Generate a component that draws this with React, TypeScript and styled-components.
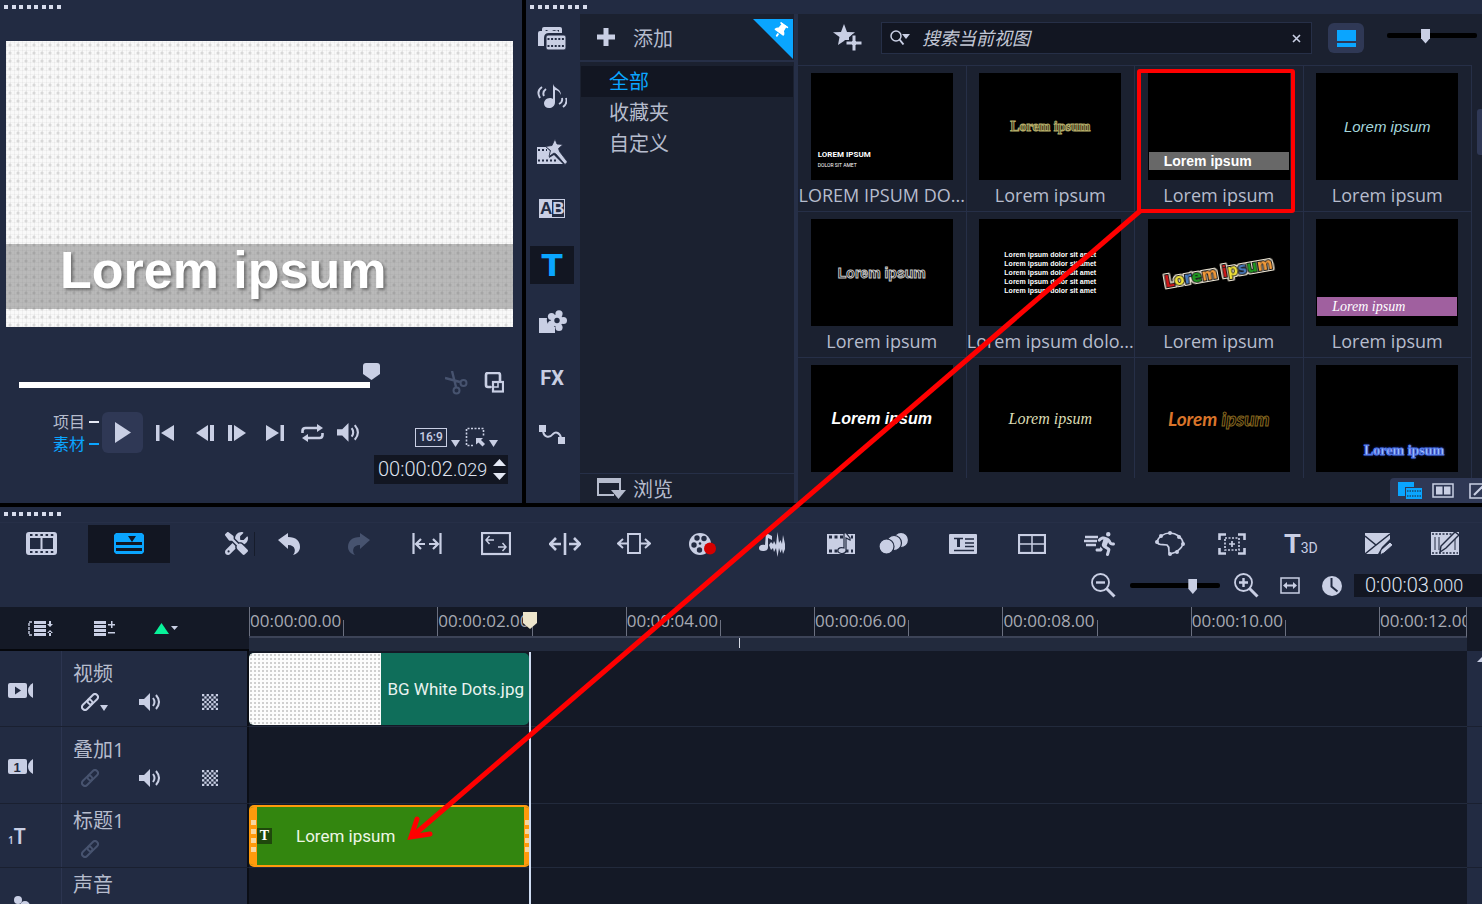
import React from "react";
import styled, { createGlobalStyle, css } from "styled-components";
import { FaPersonRunning, FaScrewdriverWrench, FaThumbtack } from "react-icons/fa6";

const c = {
  panel: "#222b42",
  shell: "#1b2130",
  deep: "#121622",
  lane: "#141926",
  line: "#262f47",
  raised: "#2f3855",
  ink: "#c9cfe4",
  text: "#b6bccd",
  dim: "#47536f",
  blue: "#0aa5ff",
  red: "#ff0000",
};

const ui = `"Open Sans", "Noto Sans CJK SC", sans-serif`;

const Global = createGlobalStyle`
  * { box-sizing: border-box; }
  body { margin: 0; background: #000; color: ${c.text}; font-family: ${ui}; overflow: hidden; }
  button { background: none; border: 0; padding: 0; margin: 0; color: inherit; font: inherit; cursor: pointer; }
  svg { display: block; flex: none; }
`;

/* ---------- shared parts ---------- */

const Workspace = styled.div`
  position: relative;
  display: flex;
  flex-direction: column;
  gap: 4px;
  height: 100vh;
  overflow: hidden;
`;

const Upper = styled.div`
  display: grid;
  grid-template-columns: 522px minmax(0, 1fr);
  grid-template-rows: minmax(0, 1fr);
  gap: 4px;
  flex: none;
  height: 503px;
`;

const GripRow = styled.div`
  display: flex;
  justify-content: space-between;
  width: 57px;
  height: 14px;
  padding-top: 5px;
  margin-left: 4px;
  flex: none;
`;

const GripDot = styled.span`
  width: 4px;
  height: 4px;
  background: #d7dcec;
`;

const Grip = () => (
  <GripRow>
    {Array.from({ length: 8 }, (_, i) => (
      <GripDot key={i} />
    ))}
  </GripRow>
);

const IconButton = styled.button<{ $w?: number; $dim?: boolean }>`
  display: flex;
  align-items: center;
  justify-content: center;
  width: ${(p) => (p.$w ? `${p.$w}px` : "auto")};
  color: ${(p) => (p.$dim ? c.dim : c.ink)};
  flex: none;
`;

const shield = "polygon(0 0, 100% 0, 100% 65%, 50% 100%, 0 65%)";

const ZoomRange = styled.input.attrs({ type: "range" })`
  appearance: none;
  width: 90px;
  height: 16px;
  margin: 0;
  background: transparent;
  flex: none;
  &::-webkit-slider-runnable-track {
    height: 5px;
    border-radius: 2px;
    background: #000;
  }
  &::-webkit-slider-thumb {
    appearance: none;
    width: 9px;
    height: 15px;
    margin-top: -4px;
    background: ${c.ink};
    clip-path: ${shield};
  }
`;

const Lcd = styled.div`
  display: flex;
  align-items: baseline;
  font: 300 20px/23px Roboto, sans-serif;
  color: #dfe3f0;
`;

const LcdSmall = styled.span`
  font-size: 18px;
`;

/* ---------- icons ---------- */

type SvgProps = { w: number; h: number; children: React.ReactNode };
const Svg = ({ w, h, children }: SvgProps) => (
  <svg width={w} height={h} viewBox={`0 0 ${w} ${h}`} fill="currentColor" aria-hidden="true">
    {children}
  </svg>
);

const stroke = { fill: "none", stroke: "currentColor", strokeWidth: 2.2 };

const Caret = ({ w = 9, h = 7 }: { w?: number; h?: number }) => (
  <Svg w={w} h={h}>
    <path d={`M0 0H${w}L${w / 2} ${h}Z`} />
  </Svg>
);

const MediaIcon = () => (
  <Svg w={28} h={26}>
    <path d="M6 1h16q2 0 2 2v4H11q-5 0-5 5v8H0q0 0 0-2V7q0-2 2-2h2V3q0-2 2-2z" />
    <path d="M7 4h14v3H11z" fill={c.panel} />
    <path d="M7 6l5-3 4 2 3-1 3 3H7z" />
    <path d="M10 9h16q2 0 2 2v11q0 2-2 2H10q-2 0-2-2V11q0-2 2-2z" stroke={c.panel} />
    <path d="M9.500 13h17M9.500 20h17" stroke={c.panel} strokeWidth="2" strokeDasharray="2 1.6" />
  </Svg>
);

const MusicIcon = () => (
  <Svg w={30} h={26}>
    <path d="M16 1c1 5 8 4 8 11-2-4-4-5-6-5v12c0 4-3 6-6 6s-5-2-5-4.500S9 15 13 15c1 0 2 0 3 1z" />
    <g fill="none" stroke="currentColor" strokeWidth="1.900">
      <path d="M5 4Q-1 8 3 15M9 6Q5 9 7 13" />
      <path d="M26 24q5-4 3-9M22 21q4-2 3-6" />
    </g>
  </Svg>
);

const InstantIcon = () => (
  <Svg w={30} h={26}>
    <path d="M0 8h9l4 4-1 7 5-3 9 9H0z" />
    <path d="M1 11h9M1 21.500h20" stroke={c.panel} strokeWidth="2" strokeDasharray="2 2" />
    <path
      d="M18 0l2 5 6 .5-4.500 4 1 3 8 10.500-2.500 2.500L19 15l-2-1-5 3.500 1.500-6-5-4 6.500-1z"
      stroke={c.panel}
      strokeWidth=".8"
    />
  </Svg>
);

const FlowerIcon = () => (
  <Svg w={29} h={24}>
    <path d="M1 8h8c-1 5 2 9 8 9v6H1z" />
    <g>
      <circle cx="21" cy="3.800" r="3.600" />
      <circle cx="13.500" cy="6.500" r="3.600" />
      <circle cx="13.500" cy="14" r="3.600" />
      <circle cx="21" cy="17.500" r="3.600" />
      <circle cx="25.400" cy="10.500" r="3.600" />
      <circle cx="19" cy="10.500" r="6" />
    </g>
    <circle cx="19" cy="10.500" r="2.700" fill={c.panel} />
  </Svg>
);

const PathIcon = () => (
  <Svg w={26} h={20}>
    <rect width="7" height="7" />
    <rect x="19" y="12" width="7" height="7" />
    <path d="M4 6c1 6 6 8 10 3 3-3 7-1 8 4" fill="none" stroke="currentColor" strokeWidth="2" />
  </Svg>
);

const StarPlusIcon = () => (
  <Svg w={30} h={28}>
    <path d="M11 0l3 8 8 .3-6 5V16l-4 0-1 1-6 4 1.500-8L0 8.300 8 8z" />
    <path d="M19 11h4v6h6v4h-6v6h-4v-6h-6v-4h6z" stroke={c.shell} strokeWidth="1" />
  </Svg>
);

const BrowseIcon = () => (
  <Svg w={30} h={22}>
    <path d="M1 1h22v11M1 1v16h16" fill="none" stroke="currentColor" strokeWidth="2" />
    <rect width="24" height="5" />
    <path d="M14 12h15l-7.500 9z" />
  </Svg>
);

const ScissorsIcon = () => (
  <Svg w={23} h={24}>
    <path d="M0 7l15 4M7 0l4 16" fill="none" stroke="currentColor" strokeWidth="2.400" />
    <circle cx="18.500" cy="12" r="3" fill="none" stroke="currentColor" strokeWidth="2" />
    <circle cx="11.500" cy="19.500" r="3" fill="none" stroke="currentColor" strokeWidth="2" />
  </Svg>
);

const ChainIcon = () => (
  <Svg w={18} h={18}>
    <g transform="rotate(-45 9 9)" fill="none" stroke="currentColor" strokeWidth="2">
      <rect x="-1" y="6" width="12" height="6" rx="3" />
      <rect x="7" y="6" width="12" height="6" rx="3" />
    </g>
  </Svg>
);

const SpeakerIcon = ({ w = 22 }: { w?: number }) => (
  <svg width={w} height={(w * 18) / 22} viewBox="0 0 22 18" fill="currentColor" aria-hidden="true">
    <path d="M0 6h5l6-6v18l-6-6H0z" />
    <path d="M14 5q3 4 0 8M17 2q6 7 0 14" fill="none" stroke="currentColor" strokeWidth="2" />
  </svg>
);

const CheckerIcon = () => (
  <Svg w={16} h={16}>
    {Array.from({ length: 49 }, (_, i) => i)
      .filter((i) => i % 2 === 0)
      .map((i) => (
        <rect key={i} x={(i % 7) * 2.3} y={Math.floor(i / 7) * 2.3} width="2.300" height="2.300" />
      ))}
  </Svg>
);

const FilmIcon = () => (
  <Svg w={31} h={23}>
    <rect x="1" y="1" width="29" height="21" rx="2" fill="none" stroke="currentColor" strokeWidth="2" />
    <path d="M1 3.500h29M1 19.500h29" stroke="currentColor" strokeWidth="5" />
    <path d="M4 3h24M4 20h24" stroke={c.panel} strokeWidth="2" strokeDasharray="2.500 2.700" />
    <path d="M3 6v11M28 6v11M15.500 6v11" stroke="currentColor" strokeWidth="2" />
  </Svg>
);

const TimelineIcon = () => (
  <Svg w={30} h={21}>
    <path d="M2 0h26l2 2v17l-2 2H2l-2-2V2z" />
    <path d="M2 9h26v3H2zM2 15h26v3H2zM14 3h8l-4 6z" fill={c.deep} />
  </Svg>
);

const UndoIcon = ({ flip }: { flip?: boolean }) => (
  <Svg w={23} h={22}>
    <path
      transform={flip ? "matrix(-1 0 0 1 23 0)" : undefined}
      d="M0 7L10 0v4c8 0 12 4 12 10 0 4-3 7-7 8 3-3 3-10-5-10v4z"
    />
  </Svg>
);

const FitWidthIcon = () => (
  <Svg w={30} h={22}>
    <path {...stroke} d="M1.500 0v21M28.500 0v21M4 11h9M17 11h9M9 6l-5 5 5 5M21 6l5 5-5 5" />
  </Svg>
);

const PanZoomIcon = () => (
  <Svg w={30} h={24}>
    <rect {...stroke} x="1" y="1" width="28" height="21" />
    <path {...stroke} strokeWidth="1.500" d="M5 8h8M8.500 4L5 8l3.500 4M17 15h8M21.500 11l3.500 4-3.500 4" />
  </Svg>
);

const SplitIcon = () => (
  <Svg w={32} h={24}>
    <path {...stroke} strokeWidth="2.600" d="M16 1v22M2 12h10M20 12h10M7 6l-6 6 6 6M25 6l6 6-6 6" />
  </Svg>
);

const StretchIcon = () => (
  <Svg w={34} h={23}>
    <path {...stroke} strokeWidth="1.900" d="M11 2h12v19H11zM1 11.500h10M23 11.500h10M6 7l-5 4.500L6 16M28 7l5 4.500-5 4.500" />
  </Svg>
);

const RecordIcon = () => (
  <Svg w={28} h={22}>
    <circle cx="11" cy="11" r="11" />
    <g fill={c.panel}>
      <circle cx="8" cy="5" r="2.700" />
      <circle cx="15" cy="5.500" r="2.700" />
      <circle cx="5" cy="12" r="2.700" />
      <circle cx="10.500" cy="17" r="2.700" />
      <circle cx="11" cy="10.500" r="1.300" />
    </g>
    <circle cx="21" cy="15.500" r="6" fill="#d40000" />
  </Svg>
);

const MixerIcon = () => (
  <Svg w={28} h={26}>
    <path d="M8 2l6 3v4l-4-2v9c0 3-2 4-5 4s-4-1-4-3 2-4 6-3z" />
    <path d="M11 14l2-3 2 2 1-3 2 4 1.500-13L21 12l1.500-3L24 13l1-9 2 9v5l-2 5-1-5-1.500 4L21 17l-1.500 9L18 17l-2 4-1-4-2 2z" />
  </Svg>
);

const AutoMusicIcon = () => (
  <Svg w={28} h={22}>
    <path d="M0 1h28v20H0z" />
    <path d="M2 4h24M2 18h24" stroke={c.panel} strokeWidth="3" strokeDasharray="3 2.500" />
    <path d="M7 7h14v8H7z" />
    <path d="M17 0h2l4 5v2l-4-2v13c-1 4-9 3-8-1 0-2 3-3 6-2z" stroke={c.panel} strokeWidth="1.200" />
  </Svg>
);

const MotionIcon = () => (
  <Svg w={30} h={22}>
    <g stroke={c.panel} strokeWidth="1.200">
      <circle cx="22" cy="7" r="7.500" />
      <circle cx="15" cy="10" r="7.500" />
      <circle cx="7.500" cy="13.500" r="7.500" />
    </g>
  </Svg>
);

const SubtitleIcon = () => (
  <Svg w={28} h={20}>
    <rect width="28" height="20" rx="1" />
    <path d="M5 4.500h9M16 5h9M16 9h9M16 12.500h9M5 16.500h20" stroke={c.panel} strokeWidth="1.600" />
    <path d="M9.500 4v9" stroke={c.panel} strokeWidth="3" />
  </Svg>
);

const SplitScreenIcon = () => (
  <Svg w={28} h={20}>
    <rect {...stroke} x="1" y="1" width="26" height="18" />
    <path d="M14 1v18M1 10h26" stroke="currentColor" strokeWidth="1.500" />
  </Svg>
);

const SpeedRow = styled.span`
  display: flex;
  align-items: center;
  & > :last-child {
    margin-left: -8px;
  }
`;

const SpeedIcon = () => (
  <SpeedRow>
    <Svg w={18} h={22}>
      <path d="M1 4h13M0 8h13M2 12h10" stroke="currentColor" strokeWidth="2.400" />
    </Svg>
    <FaPersonRunning size={24} />
  </SpeedRow>
);

const MaskIcon = () => (
  <Svg w={30} h={25}>
    <path
      {...stroke}
      strokeWidth="1.700"
      d="M15 2c6 0 12 4 13 10 0 4-4 7-7 9l-6 2c-3-3 1-6-3-9-4-1-9 1-10-3C3 6 9 2 15 2z"
    />
    <g>
      <circle cx="15" cy="2" r="2" />
      <circle cx="24" cy="6" r="2" />
      <circle cx="28" cy="13" r="2" />
      <circle cx="22" cy="21" r="2" />
      <circle cx="15" cy="23" r="2" />
      <circle cx="6" cy="5" r="2" />
      <circle cx="2" cy="11" r="2" />
    </g>
  </Svg>
);

const TrackerIcon = () => (
  <Svg w={28} h={22}>
    <path {...stroke} strokeWidth="2.600" d="M1.500 7V1.500H8M20 1.500h6.500V7M26.500 15v5.500H20M8 20.500H1.500V15" />
    <rect {...stroke} strokeWidth="1.700" x="7" y="5" width="14" height="12" strokeDasharray="2 1.500" />
    <path {...stroke} strokeWidth="1.700" d="M14 8v6M11 11h6" />
  </Svg>
);

const MarkIcon = () => (
  <Svg w={28} h={22}>
    <path d="M0 0h25v6l-8 8-4 7H0z" />
    <path d="M0 3l11 9L25 1M0 21l11-9" stroke={c.panel} strokeWidth="1.500" fill="none" />
    <path d="M15 22l1-5 9-8 3 3-9 8z" stroke={c.panel} strokeWidth="1" />
  </Svg>
);

const PaintFilmIcon = () => (
  <Svg w={30} h={23}>
    <rect x="1" y="0" width="28" height="23" />
    <path d="M2 2h26M2 21h26" stroke={c.panel} strokeWidth="1.500" strokeDasharray="2 1.500" />
    <path d="M5 5v13M9 5v13M25 6v12" stroke={c.panel} strokeWidth="1" />
    <path d="M10 20l1-6L25 0l4 3-13 13z" stroke={c.panel} strokeWidth="1.500" />
  </Svg>
);

const Magnifier = ({ plus }: { plus?: boolean }) => (
  <Svg w={25} h={25}>
    <circle {...stroke} strokeWidth="1.800" cx="9.500" cy="9.500" r="8.500" />
    <path {...stroke} strokeWidth="2.400" d={plus ? "M5 9.500h9M9.500 5v9" : "M5 9.500h9"} />
    <path d="M15.500 15.500l8 8" stroke="currentColor" strokeWidth="3" />
  </Svg>
);

const CameraIcon = ({ mark }: { mark: "play" | "one" }) => (
  <Svg w={26} h={16}>
    <rect width="19" height="15" rx="2" />
    <path d="M25 0v15q-5-3-5-7.500T25 0z" />
    {mark === "play" ? (
      <path d="M7 3.500l6 4-6 4z" fill={c.panel} />
    ) : (
      <text x="9" y="12.500" textAnchor="middle" fontFamily="Liberation Sans" fontWeight="700" fontSize="13" fill={c.panel}>
        1
      </text>
    )}
  </Svg>
);

/* ---------- preview ---------- */

const Preview = styled.section`
  display: flex;
  flex-direction: column;
  background: ${c.panel};
`;

const Screen = styled.div`
  display: flex;
  flex-direction: column;
  justify-content: flex-end;
  height: 286px;
  margin: 27px 9px 0 6px;
  padding-bottom: 18px;
  background-color: #f9f9f9;
  background-image: radial-gradient(circle, #d8d8d8 1px, transparent 2px),
    repeating-linear-gradient(90deg, rgba(0, 0, 0, 0.035) 0 1px, transparent 1px 4px),
    repeating-linear-gradient(0deg, rgba(0, 0, 0, 0.03) 0 1px, transparent 1px 4px);
  background-size: 8px 8px, auto, auto;
`;

const ScreenTitle = styled.div`
  height: 65px;
  padding-left: 54px;
  background: rgba(90, 90, 90, 0.4);
  color: #fff;
  font: 700 52px/53px "Liberation Sans", Arial, sans-serif;
  text-shadow: 2px 2px 3px rgba(0, 0, 0, 0.4);
`;

const ScrubRow = styled.div`
  display: flex;
  align-items: center;
  margin-top: 36px;
  padding: 0 18px 0 19px;
  height: 31px;
`;

const Scrub = styled.input.attrs({ type: "range" })`
  appearance: none;
  width: 361px;
  height: 31px;
  margin: 0 auto 0 0;
  background: transparent;
  &::-webkit-slider-runnable-track {
    height: 6px;
    margin-top: 13px;
    background: linear-gradient(#fff, #fff) no-repeat 0 0 / calc(100% - 10px) 100%;
  }
  &::-webkit-slider-thumb {
    appearance: none;
    width: 17px;
    height: 17px;
    margin-top: -19px;
    border-radius: 3px;
    background: ${c.ink};
    clip-path: ${shield};
  }
`;

const ClipActions = styled.div`
  display: flex;
  gap: 16px;
  padding-top: 8px;
`;

const Transport = styled.div`
  display: flex;
  align-items: flex-start;
  justify-content: space-between;
  margin-top: 18px;
  padding: 0 14px 0 53px;
`;

const Playback = styled.div`
  display: flex;
  align-items: center;
  height: 41px;
`;

const ModeSwitch = styled.div`
  display: flex;
  flex-direction: column;
  margin-right: 3px;
`;

const Mode = styled.button<{ $on?: boolean }>`
  display: flex;
  align-items: center;
  gap: 4px;
  font-size: 16px;
  line-height: 22px;
  color: ${(p) => (p.$on ? c.blue : c.text)};
  &::after {
    content: "";
    width: 10px;
    height: 2px;
    background: ${(p) => (p.$on ? c.blue : "#e4e8f4")};
  }
`;

const PlayButton = styled(IconButton)`
  width: 41px;
  height: 41px;
  border-radius: 6px;
  background: ${c.raised};
`;

const StepButtons = styled.div`
  display: grid;
  grid-template-columns: repeat(6, 1fr);
  width: 220px;
  margin-left: 4px;
`;

const Readout = styled.div`
  display: flex;
  flex-direction: column;
  align-items: flex-end;
  gap: 8px;
  padding-top: 15px;
`;

const RatioRow = styled.div`
  display: flex;
  align-items: flex-end;
  gap: 5px;
  height: 20px;
  padding-right: 10px;
`;

const Ratio = styled.span`
  width: 32px;
  height: 19px;
  border: 1px solid ${c.ink};
  font: 500 12px/17px Roboto, sans-serif;
  text-align: center;
`;

const Menu = styled.button`
  display: flex;
  align-items: flex-end;
  gap: 4px;
  color: ${c.ink};
`;

const TimeField = styled.div`
  display: flex;
  align-items: center;
  justify-content: space-between;
  width: 134px;
  height: 29px;
  padding: 0 2px 0 4px;
  background: ${c.deep};
`;

const Spinner = styled.div`
  display: flex;
  flex-direction: column;
  gap: 7px;
  color: #e4e8f4;
`;

const PreviewPanel = () => (
  <Preview>
    <Grip />
    <Screen>
      <ScreenTitle>Lorem ipsum</ScreenTitle>
    </Screen>
    <ScrubRow>
      <Scrub aria-label="播放位置" defaultValue={100} />
      <ClipActions>
        <IconButton $dim aria-label="剪切">
          <ScissorsIcon />
        </IconButton>
        <IconButton aria-label="复制">
          <Svg w={20} h={21}>
            <path d="M7 15H4q-2 0-2-2V3q0-2 2-2h10q2 0 2 2v6" {...stroke} strokeWidth="2.600" />
            <rect x="9" y="10" width="10" height="9.500" {...stroke} />
            <path d="M6 15h8V9" {...stroke} strokeWidth="1.600" />
          </Svg>
        </IconButton>
      </ClipActions>
    </ScrubRow>
    <Transport>
      <Playback>
        <ModeSwitch>
          <Mode>项目</Mode>
          <Mode $on>素材</Mode>
        </ModeSwitch>
        <PlayButton aria-label="播放">
          <Svg w={16} h={21}>
            <path d="M0 0l16 10.500L0 21z" />
          </Svg>
        </PlayButton>
        <StepButtons>
          <IconButton aria-label="起始">
            <Svg w={18} h={18}>
              <path d="M0 1h3.500v16H0zM18 1v16L5 9z" />
            </Svg>
          </IconButton>
          <IconButton aria-label="上一帧">
            <Svg w={24} h={18}>
              <path d="M24 1v16h-4V1zM18 1v16L6 9z" />
            </Svg>
          </IconButton>
          <IconButton aria-label="下一帧">
            <Svg w={22} h={18}>
              <path d="M0 1h4v16H0zM6 1v16l12-8z" />
            </Svg>
          </IconButton>
          <IconButton aria-label="结束">
            <Svg w={18} h={18}>
              <path d="M14.500 1H18v16h-3.500zM0 1v16l13-8z" />
            </Svg>
          </IconButton>
          <IconButton aria-label="重复">
            <Svg w={23} h={18}>
              <path d="M1.500 9V7q0-3 3-3H17M21.500 9v2q0 3-3 3H6" {...stroke} strokeWidth="2.600" />
              <path d="M16 0l6 4-6 4zM7 10l-6 4 6 4z" />
            </Svg>
          </IconButton>
          <IconButton aria-label="音量">
            <SpeakerIcon w={23} />
          </IconButton>
        </StepButtons>
      </Playback>
      <Readout>
        <RatioRow>
          <Menu>
            <Ratio>16:9</Ratio>
            <Caret />
          </Menu>
          <Menu aria-label="选择">
            <Svg w={20} h={20}>
              <path
                d="M8 18.500H1.500v-17h17V9"
                fill="none"
                stroke="currentColor"
                strokeWidth="1.600"
                strokeDasharray="2 1.500"
              />
              <path d="M11 11h7l-2 2 4 4-2.500 2.500-4-4-2.500 2z" />
            </Svg>
            <Caret />
          </Menu>
        </RatioRow>
        <TimeField>
          <Lcd>
            00:00:02<LcdSmall>.029</LcdSmall>
          </Lcd>
          <Spinner>
            <button aria-label="增加">
              <Svg w={13} h={7}>
                <path d="M0 7h13L6.500 0z" />
              </Svg>
            </button>
            <button aria-label="减少">
              <Caret w={13} h={7} />
            </button>
          </Spinner>
        </TimeField>
      </Readout>
    </Transport>
  </Preview>
);

/* ---------- library ---------- */

const Library = styled.section`
  display: flex;
  flex-direction: column;
  min-height: 0;
  background: ${c.panel};
`;

const LibraryBody = styled.div`
  display: grid;
  grid-template-columns: 54px 214px minmax(0, 1fr);
  grid-template-rows: minmax(0, 1fr);
  flex: 1;
  min-height: 0;
`;

const Categories = styled.nav`
  display: flex;
  flex-direction: column;
  height: 452px;
  margin: -3px 2px 0 0;
  align-items: center;
`;

const Category = styled.button<{ $on?: boolean }>`
  display: flex;
  flex: 1;
  align-items: center;
  justify-content: center;
  color: ${(p) => (p.$on ? c.blue : c.ink)};
  & > span {
    display: flex;
    align-items: center;
    justify-content: center;
    width: 44px;
    height: 38px;
    background: ${(p) => (p.$on ? c.deep : "transparent")};
  }
`;

const TitleGlyph = styled.b`
  font: 700 31px/40px "DejaVu Sans", sans-serif;
`;

const FxGlyph = styled.b`
  font: 700 20px/40px Roboto, sans-serif;
`;

const TransitionGlyph = styled.b`
  display: grid;
  grid-template-columns: 1fr 1fr;
  width: 26px;
  border: 1px solid ${c.ink};
  font: 700 17px/17px "Liberation Sans", sans-serif;
  text-align: center;
  & > :first-child {
    background: ${c.ink};
    color: ${c.panel};
  }
`;

const Folders = styled.div`
  display: flex;
  flex-direction: column;
  background: ${c.shell};
  font-size: 20px;
`;

const AddBar = styled.div`
  display: flex;
  justify-content: space-between;
  height: 48px;
  border-bottom: 2px solid ${c.line};
`;

const AddButton = styled.button`
  display: flex;
  align-items: center;
  gap: 18px;
  padding-left: 17px;
`;

const PinCorner = styled.button`
  display: flex;
  justify-content: flex-end;
  width: 40px;
  height: 40px;
  margin: 5px 1px 0 0;
  padding: 4px 5px;
  background: ${c.blue};
  clip-path: polygon(0 0, 100% 0, 100% 100%);
  color: #fff;
  svg {
    transform: rotate(35deg);
  }
`;

const FolderList = styled.div`
  display: flex;
  flex-direction: column;
  flex: 1;
  padding: 4px 1px 0;
`;

const Folder = styled.button<{ $on?: boolean }>`
  height: 31px;
  padding-left: 28px;
  text-align: left;
  line-height: 31px;
  background: ${(p) => (p.$on ? c.deep : "transparent")};
  color: ${(p) => (p.$on ? c.blue : c.text)};
`;

const BrowseBar = styled.button`
  display: flex;
  align-items: center;
  gap: 6px;
  height: 30px;
  padding-left: 17px;
  border-top: 1px solid ${c.line};
`;

const Gallery = styled.div`
  display: flex;
  flex-direction: column;
  min-width: 0;
  min-height: 0;
  background: ${c.shell};
  border-left: 4px solid ${c.line};
  overflow: hidden;
`;

const GalleryBar = styled.div`
  display: flex;
  align-items: center;
  height: 51px;
  padding: 0 5px 3px 35px;
  flex: none;
`;

const SearchBox = styled.label`
  display: flex;
  align-items: center;
  flex: 1;
  min-width: 0;
  height: 32px;
  margin: 0 16px 0 18px;
  padding: 0 10px 0 8px;
  background: ${c.deep};
  border: 1px solid ${c.line};
`;

const SearchInput = styled.input`
  flex: 1;
  min-width: 0;
  margin-left: 12px;
  padding: 0;
  border: 0;
  outline: 0;
  background: transparent;
  color: ${c.text};
  font: italic 18px/24px ${ui};
  &::placeholder {
    color: #c3c8d6;
    opacity: 1;
  }
`;

const LayoutToggle = styled(IconButton)`
  width: 36px;
  height: 30px;
  margin-right: 23px;
  border-radius: 6px;
  background: ${c.raised};
  color: ${c.blue};
`;

const SizeControl = styled.div`
  display: flex;
  padding-bottom: 6px;
`;

const GalleryScroll = styled.div`
  display: flex;
  flex: 1;
  min-height: 0;
  overflow: hidden;
`;

const CardGrid = styled.div`
  display: grid;
  flex: 1;
  grid-template-columns: repeat(4, minmax(0, 1fr));
  grid-auto-rows: 146px;
  margin-right: 5px;
  border-top: 1px solid ${c.line};
`;

const ScrollThumb = styled.div`
  width: 5px;
  height: 46px;
  margin-top: 44px;
  border-radius: 3px 0 0 3px;
  background: ${c.raised};
`;

const Card = styled.figure`
  display: flex;
  flex-direction: column;
  align-items: center;
  margin: 0;
  padding-top: 7px;
  border-right: 1px solid ${c.line};
  border-bottom: 1px solid ${c.line};
`;

const CardName = styled.figcaption`
  margin-top: 3px;
  font-size: 18px;
  line-height: 24px;
  white-space: nowrap;
`;

const Thumb = styled.div<{ $place?: "center" | "start" | "end" | "bar" }>`
  display: flex;
  flex-direction: column;
  width: 142px;
  height: 107px;
  background: #000;
  color: #fff;
  white-space: nowrap;
  ${(p) => {
    switch (p.$place) {
      case "start":
        return css`justify-content: flex-end; align-items: flex-start; padding: 0 0 10px 7px;`;
      case "end":
        return css`justify-content: flex-end; align-items: flex-end; padding: 0 14px 12px 0;`;
      case "bar":
        return css`justify-content: flex-end; padding: 0 1px 10px;`;
      default:
        return css`justify-content: center; align-items: center;`;
    }
  }}
`;

const Sample = styled.span<{ $font: string; $ink?: string; $edge?: string; $glow?: string }>`
  font: ${(p) => p.$font};
  color: ${(p) => p.$ink ?? "#fff"};
  -webkit-text-stroke: ${(p) => (p.$edge ? `1px ${p.$edge}` : "0")};
  text-shadow: ${(p) => (p.$glow ? `0 0 3px ${p.$glow}` : "none")};
`;

const Bar = styled(Sample)<{ $fill: string }>`
  padding-left: 15px;
  background: ${(p) => p.$fill};
`;

const Tilted = styled.span`
  font: 700 15px/20px "DejaVu Sans", sans-serif;
  -webkit-text-stroke: 2px #1a1a1a;
  paint-order: stroke fill;
  filter: drop-shadow(1px 0 #f2ead8) drop-shadow(-1px 0 #f2ead8) drop-shadow(0 1px #f2ead8) drop-shadow(0 -1px #f2ead8);
  transform: rotate(-10deg);
`;

const Letter = styled.span<{ $ink: string }>`
  color: ${(p) => p.$ink};
`;

const OutlinedWord = styled.span`
  color: #000;
  -webkit-text-stroke: 1px #85661f;
`;

const sans = `"Liberation Sans", Arial, sans-serif`;
const serif = `"Liberation Serif", serif`;
const rainbow = ["#d01818", "#f0e23a", "#4a7cc0", "#1f9a1f", "#f29a3a"];

const cards: { name?: string; art: React.ReactNode }[] = [
  {
    name: "LOREM IPSUM DO...",
    art: (
      <Thumb $place="start">
        <Sample $font="700 8px/12px Roboto, sans-serif">LOREM IPSUM</Sample>
        <Sample $font="400 5px/9px Roboto, sans-serif">DOLOR SIT AMET</Sample>
      </Thumb>
    ),
  },
  {
    name: "Lorem ipsum",
    art: (
      <Thumb>
        <Sample $font={`700 14px/18px ${serif}`} $ink="#2c2a14" $edge="#b3ab68">Lorem ipsum</Sample>
      </Thumb>
    ),
  },
  {
    name: "Lorem ipsum",
    art: (
      <Thumb $place="bar">
        <Bar $font={`700 14px/18px ${sans}`} $fill="#686868">Lorem ipsum</Bar>
      </Thumb>
    ),
  },
  {
    name: "Lorem ipsum",
    art: (
      <Thumb>
        <Sample $font={`italic 400 15px/18px ${sans}`} $ink="#a5d6dc">Lorem ipsum</Sample>
      </Thumb>
    ),
  },
  {
    name: "Lorem ipsum",
    art: (
      <Thumb>
        <Sample $font={`700 14px/18px ${sans}`} $ink="#000" $edge="#c4c4c4">Lorem ipsum</Sample>
      </Thumb>
    ),
  },
  {
    name: "Lorem ipsum dolo...",
    art: (
      <Thumb>
        {[0, 1, 2, 3, 4].map((i) => (
          <Sample key={i} $font={`700 7px/9px ${sans}`}>Lorem ipsum dolor sit amet</Sample>
        ))}
      </Thumb>
    ),
  },
  {
    name: "Lorem ipsum",
    art: (
      <Thumb>
        <Tilted>
          {["Lorem", "ipsum"].map((word, w) => (
            <React.Fragment key={word}>
              {w > 0 && " "}
              {word.split("").map((ch, i) => (
                <Letter key={i} $ink={rainbow[i]}>{ch}</Letter>
              ))}
            </React.Fragment>
          ))}
        </Tilted>
      </Thumb>
    ),
  },
  {
    name: "Lorem ipsum",
    art: (
      <Thumb $place="bar">
        <Bar $font={`italic 400 14px/19px ${serif}`} $fill="#a0609f">Lorem ipsum</Bar>
      </Thumb>
    ),
  },
  {
    art: (
      <Thumb>
        <Sample $font={`italic 700 16px/18px ${sans}`}>Lorem ipsum</Sample>
      </Thumb>
    ),
  },
  {
    art: (
      <Thumb>
        <Sample $font={`italic 400 16px/18px ${serif}`} $ink="#dcdcb4">Lorem ipsum</Sample>
      </Thumb>
    ),
  },
  {
    art: (
      <Thumb>
        <Sample $font="italic 700 19px/20px Lato, sans-serif" $ink="#d9742a">
          Lorem <OutlinedWord>ipsum</OutlinedWord>
        </Sample>
      </Thumb>
    ),
  },
  {
    art: (
      <Thumb $place="end">
        <Sample $font={`700 14px/18px ${serif}`} $ink="#c4d6ff" $edge="#5078e8" $glow="#2a50ff">Lorem ipsum</Sample>
      </Thumb>
    ),
  },
];

const GalleryFoot = styled.div`
  display: flex;
  justify-content: flex-end;
  height: 25px;
  flex: none;
`;

const ViewSwitch = styled.div`
  display: flex;
  align-items: center;
  gap: 10px;
  width: 92px;
  padding-left: 8px;
  overflow: hidden;
  background: ${c.raised};
  border-radius: 4px 0 0 0;
`;

const BlueButton = styled(IconButton)`
  color: ${c.blue};
`;

const categories: { name: string; icon: React.ReactNode }[] = [
  { name: "媒体", icon: <MediaIcon /> },
  { name: "声音", icon: <MusicIcon /> },
  { name: "即时项目", icon: <InstantIcon /> },
  { name: "转场", icon: <TransitionGlyph><span>A</span><span>B</span></TransitionGlyph> },
  { name: "标题", icon: <TitleGlyph>T</TitleGlyph> },
  { name: "图形", icon: <FlowerIcon /> },
  { name: "滤镜", icon: <FxGlyph>FX</FxGlyph> },
  { name: "路径", icon: <PathIcon /> },
];

const LibraryPanel = () => (
  <Library>
    <Grip />
    <LibraryBody>
      <Categories>
        {categories.map((k) => (
          <Category key={k.name} aria-label={k.name} $on={k.name === "标题"}>
            <span>{k.icon}</span>
          </Category>
        ))}
      </Categories>
      <Folders>
        <AddBar>
          <AddButton>
            <Svg w={18} h={18}>
              <path d="M6.500 0h5v6.500H18v5h-6.500V18h-5v-6.500H0v-5h6.500z" fill={c.ink} />
            </Svg>
            添加
          </AddButton>
          <PinCorner aria-label="固定">
            <FaThumbtack size={15} />
          </PinCorner>
        </AddBar>
        <FolderList>
          <Folder $on>全部</Folder>
          <Folder>收藏夹</Folder>
          <Folder>自定义</Folder>
        </FolderList>
        <BrowseBar>
          <BrowseIcon />
          浏览
        </BrowseBar>
      </Folders>
      <Gallery>
        <GalleryBar>
          <IconButton aria-label="收藏">
            <StarPlusIcon />
          </IconButton>
          <SearchBox>
            <Svg w={20} h={16}>
              <circle cx="6" cy="6" r="5" fill="none" stroke={c.ink} strokeWidth="1.500" />
              <path d="M9.500 9.500l4 5" stroke={c.ink} strokeWidth="2" />
              <path d="M12 4h8l-4 5z" fill={c.ink} />
            </Svg>
            <SearchInput aria-label="搜索" placeholder="搜索当前视图" />
            <IconButton aria-label="清除">
              <Svg w={9} h={9}>
                <path d="M1 1l7 7M8 1L1 8" stroke="currentColor" strokeWidth="1.600" />
              </Svg>
            </IconButton>
          </SearchBox>
          <LayoutToggle aria-label="显示标题">
            <Svg w={19} h={17}>
              <path d="M0 0h19v11H0zM0 13h19v4H0z" />
            </Svg>
          </LayoutToggle>
          <SizeControl>
            <ZoomRange aria-label="缩略图大小" defaultValue={42} />
          </SizeControl>
        </GalleryBar>
        <GalleryScroll>
          <CardGrid>
            {cards.map((card, i) => (
              <Card key={i}>
                {card.art}
                {card.name && <CardName>{card.name}</CardName>}
              </Card>
            ))}
          </CardGrid>
          <ScrollThumb />
        </GalleryScroll>
        <GalleryFoot>
          <ViewSwitch>
            <BlueButton aria-label="媒体视图">
              <Svg w={24} h={18}>
                <path d="M0 0h16v5H7v9H0z" />
                <rect x="8" y="6" width="16" height="11" />
                <path d="M9 9h14M9 14h14" stroke={c.shell} strokeDasharray="1.500 1" />
              </Svg>
            </BlueButton>
            <IconButton aria-label="双栏视图">
              <Svg w={22} h={15}>
                <rect x="1" y="1" width="20" height="13" fill="none" stroke="currentColor" strokeWidth="1.500" />
                <path d="M4 3.500h6.500v8H4zM12 3.500h6.500v8H12z" />
              </Svg>
            </IconButton>
            <IconButton aria-label="选项">
              <Svg w={26} h={16}>
                <path d="M18 1H6v14h16V8" {...stroke} strokeWidth="1.600" />
                <path d="M10 12l10-10" {...stroke} />
              </Svg>
            </IconButton>
          </ViewSwitch>
        </GalleryFoot>
      </Gallery>
    </LibraryBody>
  </Library>
);

/* ---------- timeline ---------- */

const Timeline = styled.section`
  display: flex;
  flex-direction: column;
  flex: 1;
  min-height: 0;
  background: ${c.panel};
`;

const ToolRow = styled.div`
  display: flex;
  align-items: center;
  height: 42px;
  margin-top: 1px;
  border-top: 1px solid ${c.line};
  overflow: hidden;
  flex: none;
`;

const ToolGroup = styled.div<{ $before?: number; $gap?: number }>`
  display: flex;
  gap: ${(p) => p.$gap ?? 33}px;
  margin-left: ${(p) => p.$before ?? 0}px;
`;

const TabButton = styled.button<{ $on?: boolean }>`
  display: flex;
  align-items: center;
  justify-content: center;
  width: 82px;
  height: 38px;
  background: ${(p) => (p.$on ? c.deep : "transparent")};
  color: ${(p) => (p.$on ? c.blue : c.ink)};
`;

const ToolDivider = styled.span`
  width: 1px;
  height: 24px;
  margin-right: 16px;
  background: #161c2b;
`;

const Title3D = styled.span`
  display: flex;
  align-items: baseline;
  font: 700 27px/30px "Liberation Sans", sans-serif;
`;

const Title3DSub = styled.span`
  font: 400 14px/16px Roboto, sans-serif;
`;

const ZoomRow = styled.div`
  display: flex;
  align-items: center;
  justify-content: flex-end;
  height: 43px;
  flex: none;
`;

const ZoomGroup = styled.div`
  display: flex;
  align-items: center;
  gap: 14px;
  margin-right: 21px;
`;

const TimeGroup = styled.div`
  display: flex;
  align-items: center;
  gap: 22px;
`;

const ProjectLength = styled.div`
  width: 128px;
  height: 23px;
  margin-left: 12px;
  padding-left: 11px;
  background: ${c.deep};
`;

const RulerRow = styled.div`
  display: grid;
  grid-template-columns: 249px minmax(0, 1fr) 15px;
  height: 44px;
  flex: none;
  background: ${c.lane};
`;

const TrackTools = styled.div`
  display: flex;
  align-items: center;
  gap: 38px;
  padding-left: 26px;
  border-bottom: 2px solid #05070c;
`;

const Ruler = styled.div`
  position: relative;
  border-bottom: 13px solid #222a3d;
`;

const Marks = styled.div`
  display: grid;
  grid-template-columns: repeat(6, 13fr) 6fr;
  height: 31px;
  border-bottom: 2px solid #3c4357;
  border-right: 1px solid #6b7080;
`;

const Mark = styled.div`
  display: flex;
  overflow: hidden;
  border-left: 1px solid #6b7080;
  background: linear-gradient(#6b7080, #6b7080) no-repeat 50% 100% / 1px 16px;
  font-size: 17px;
  line-height: 27px;
  color: #a7aab3;
  &:last-child {
    background: none;
  }
`;

const Playhead = styled.div`
  position: absolute;
  left: 274px;
  top: 5px;
  width: 14px;
  height: 17px;
  background: #ede5cc;
  clip-path: ${shield};
`;

const EndMark = styled.div`
  position: absolute;
  left: 490px;
  top: 31px;
  width: 1px;
  height: 10px;
  background: #d5d9e4;
`;

const Tracks = styled.div`
  position: relative;
  display: flex;
  flex-direction: column;
  flex: 1;
  min-height: 0;
  overflow: hidden;
`;

const Track = styled.div<{ $h: number }>`
  display: grid;
  grid-template-columns: 62px 187px minmax(0, 1fr) 15px;
  height: ${(p) => p.$h}px;
  flex: none;
  border-bottom: 1px solid #1a2030;
`;

const TrackKind = styled.div`
  display: flex;
  align-items: center;
  padding: 4px 0 0 8px;
  border-right: 1px solid #2c3550;
  color: ${c.ink};
`;

const TrackInfo = styled.div<{ $tight?: boolean }>`
  display: flex;
  flex-direction: column;
  padding: ${(p) => (p.$tight ? 4 : 10)}px 0 0 11px;
  border-right: 2px solid #0b0e16;
  font-size: 20px;
  line-height: 26px;
`;

const TrackSwitches = styled.div`
  display: grid;
  grid-template-columns: 58px 63px 16px;
  align-items: center;
  justify-items: start;
  height: 30px;
  padding-left: 8px;
`;

const LinkSwitch = styled.button<{ $dim?: boolean }>`
  display: flex;
  align-items: flex-end;
  gap: 1px;
  color: ${(p) => (p.$dim ? c.dim : c.ink)};
`;

const Lane = styled.div`
  display: flex;
  align-items: center;
  background: ${c.lane};
  box-shadow: 0 1px 0 #222a3c;
`;

const VideoClip = styled.div`
  display: flex;
  justify-content: space-between;
  align-items: center;
  width: 280px;
  height: 72px;
  padding-right: 5px;
  border-radius: 5px;
  overflow: hidden;
  background: #0f6e5a;
  color: #e9f3f0;
  font: 400 17px/20px Roboto, sans-serif;
`;

const ClipImage = styled.div`
  width: 132px;
  height: 100%;
  background: radial-gradient(circle, #cfcfcf 1px, transparent 1px) 0 0 / 4px 4px #fcfcfc;
`;

const TitleClip = styled.div`
  display: flex;
  align-items: center;
  width: 281px;
  height: 62px;
  border: solid #ff9a0c;
  border-width: 2px 0;
  border-radius: 5px;
  overflow: hidden;
  background: #33860f;
  color: #eef6e6;
  font: 400 17px/20px Roboto, sans-serif;
`;

const ClipHandle = styled.div<{ $w: number }>`
  display: flex;
  flex-direction: column;
  align-items: center;
  justify-content: center;
  gap: 4px;
  width: ${(p) => p.$w}px;
  height: 100%;
  background: #ff9a0c;
`;

const HandleDot = styled.span`
  width: 5px;
  height: 5px;
  background: #f7d6a0;
`;

const ClipBadge = styled.b`
  width: 15px;
  margin-right: 24px;
  background: #1f480c;
  color: #fff;
  font: 700 14px/16px "Liberation Serif", serif;
  text-align: center;
`;

const ClipName = styled.span`
  flex: 1;
`;

const Cursor = styled.div`
  position: absolute;
  left: 529px;
  top: 1px;
  bottom: 0;
  width: 2px;
  background: #cfdcf2;
`;

const TitleTrackMark = styled.span`
  display: flex;
  align-items: baseline;
  font: 600 21px/24px "Noto Sans", sans-serif;
`;

const TrackOrder = styled.span`
  font-size: 10px;
`;

const Gutter = styled.div`
  display: flex;
  justify-content: flex-end;
  padding-top: 6px;
  overflow: hidden;
`;

const Handle = ({ w }: { w: number }) => (
  <ClipHandle $w={w}>
    {[0, 1, 2, 3].map((i) => (
      <HandleDot key={i} />
    ))}
  </ClipHandle>
);

const mainTools: { name: string; icon: React.ReactNode; dim?: boolean }[] = [
  { name: "撤消", icon: <UndoIcon /> },
  { name: "重复", icon: <UndoIcon flip />, dim: true },
  { name: "适合窗口", icon: <FitWidthIcon /> },
  { name: "平移和缩放", icon: <PanZoomIcon /> },
  { name: "拆分", icon: <SplitIcon /> },
  { name: "伸展", icon: <StretchIcon /> },
  { name: "录制", icon: <RecordIcon /> },
  { name: "混音器", icon: <MixerIcon /> },
  { name: "自动音乐", icon: <AutoMusicIcon /> },
];

const effectTools: { name: string; icon: React.ReactNode }[] = [
  { name: "运动追踪", icon: <MotionIcon /> },
  { name: "字幕编辑器", icon: <SubtitleIcon /> },
  { name: "分屏模板", icon: <SplitScreenIcon /> },
  { name: "时间重新映射", icon: <SpeedIcon /> },
  { name: "遮罩创建器", icon: <MaskIcon /> },
];

const TimelinePanel = () => (
  <Timeline>
    <Grip />
    <ToolRow>
      <ToolGroup $gap={6}>
        <TabButton aria-label="故事板视图"><FilmIcon /></TabButton>
        <TabButton aria-label="时间轴视图" $on><TimelineIcon /></TabButton>
      </ToolGroup>
      <ToolGroup $before={48}>
        <IconButton $w={36} aria-label="自定义工具栏"><FaScrewdriverWrench size={23} /></IconButton>
      </ToolGroup>
      <ToolDivider />
      <ToolGroup>
        {mainTools.map((t) => (
          <IconButton key={t.name} $w={36} $dim={t.dim} aria-label={t.name}>{t.icon}</IconButton>
        ))}
      </ToolGroup>
      <ToolGroup $before={17}>
        {effectTools.map((t) => (
          <IconButton key={t.name} $w={36} aria-label={t.name}>{t.icon}</IconButton>
        ))}
      </ToolGroup>
      <ToolGroup $before={26}>
        <IconButton $w={36} aria-label="运动跟踪"><TrackerIcon /></IconButton>
        <IconButton $w={36} aria-label="3D 标题">
          <Title3D>T<Title3DSub>3D</Title3DSub></Title3D>
        </IconButton>
      </ToolGroup>
      <ToolGroup $before={42} $gap={30}>
        <IconButton $w={36} aria-label="标记"><MarkIcon /></IconButton>
        <IconButton $w={36} aria-label="绘图"><PaintFilmIcon /></IconButton>
      </ToolGroup>
    </ToolRow>
    <ZoomRow>
      <ZoomGroup>
        <IconButton aria-label="缩小"><Magnifier /></IconButton>
        <ZoomRange aria-label="时间轴缩放" defaultValue={72} />
        <IconButton aria-label="放大"><Magnifier plus /></IconButton>
      </ZoomGroup>
      <TimeGroup>
        <IconButton aria-label="适合项目">
          <Svg w={20} h={17}>
            <rect x="1" y="1" width="18" height="15" {...stroke} strokeWidth="1.500" />
            <path d="M3 8.500l4-3.500v2.500h6V5l4 3.500-4 3.500V9.500H7V12z" />
          </Svg>
        </IconButton>
        <IconButton aria-label="项目时间">
          <Svg w={20} h={20}>
            <circle cx="10" cy="10" r="10" />
            <path d="M9.500 2v8.500l6 5" fill="none" stroke={c.panel} strokeWidth="2" />
          </Svg>
        </IconButton>
      </TimeGroup>
      <ProjectLength>
        <Lcd>0:00:03<LcdSmall>.000</LcdSmall></Lcd>
      </ProjectLength>
    </ZoomRow>
    <RulerRow>
      <TrackTools>
        <IconButton $w={30} aria-label="显示全部轨道">
          <Svg w={26} h={15}>
            <path d="M4 1H1v13h3" {...stroke} strokeWidth="1.400" strokeDasharray="3 1" />
            <path d="M6 0h12v3H6zM6 4h12v3H6zM6 8h12v3H6zM6 12h12v3H6zM19 3h6l-3 3zM19 12h6l-3-3zM21 0h2v4h-2zM21 11h2v4h-2z" />
          </Svg>
        </IconButton>
        <IconButton aria-label="添加或移除轨道">
          <Svg w={22} h={15}>
            <path d="M0 0h12v3H0zM0 4h12v3H0zM0 8h12v3H0zM0 12h12v3H0zM14 3h7v1.500h-7zM17 0h1.500v7H17zM14 11h7v1.500h-7z" />
          </Svg>
        </IconButton>
        <IconButton aria-label="章节点">
          <Svg w={24} h={12}>
            <path d="M0 12L7.500 1 15 12z" fill="#08f29a" />
            <path d="M17 4h7l-3.500 4z" />
          </Svg>
        </IconButton>
      </TrackTools>
      <Ruler>
        <Marks>
          {["00", "02", "04", "06", "08", "10", "12"].map((s) => (
            <Mark key={s}>00:00:{s}.00</Mark>
          ))}
        </Marks>
        <Playhead />
        <EndMark />
      </Ruler>
    </RulerRow>
    <Tracks>
      <Track $h={76}>
        <TrackKind><CameraIcon mark="play" /></TrackKind>
        <TrackInfo>
          视频
          <TrackSwitches>
            <LinkSwitch aria-label="链接"><ChainIcon /><Caret w={8} h={6} /></LinkSwitch>
            <IconButton aria-label="静音"><SpeakerIcon /></IconButton>
            <IconButton aria-label="透明度"><CheckerIcon /></IconButton>
          </TrackSwitches>
        </TrackInfo>
        <Lane>
          <VideoClip><ClipImage />BG White Dots.jpg</VideoClip>
        </Lane>
        <Gutter>
          <Svg w={5} h={5}>
            <path d="M0 5h5V0z" fill={c.ink} />
          </Svg>
        </Gutter>
      </Track>
      <Track $h={77}>
        <TrackKind><CameraIcon mark="one" /></TrackKind>
        <TrackInfo>
          叠加1
          <TrackSwitches>
            <LinkSwitch aria-label="链接" $dim><ChainIcon /></LinkSwitch>
            <IconButton aria-label="静音"><SpeakerIcon /></IconButton>
            <IconButton aria-label="透明度"><CheckerIcon /></IconButton>
          </TrackSwitches>
        </TrackInfo>
        <Lane />
      </Track>
      <Track $h={64}>
        <TrackKind>
          <TitleTrackMark><TrackOrder>1</TrackOrder>T</TitleTrackMark>
        </TrackKind>
        <TrackInfo $tight>
          标题1
          <TrackSwitches>
            <LinkSwitch aria-label="链接" $dim><ChainIcon /></LinkSwitch>
          </TrackSwitches>
        </TrackInfo>
        <Lane>
          <TitleClip>
            <Handle w={8} />
            <ClipBadge>T</ClipBadge>
            <ClipName>Lorem ipsum</ClipName>
            <Handle w={6} />
          </TitleClip>
        </Lane>
      </Track>
      <Track $h={72}>
        <TrackKind>
          <Svg w={26} h={20}>
            <circle cx="10" cy="4" r="4" />
            <circle cx="17" cy="10" r="5" />
          </Svg>
        </TrackKind>
        <TrackInfo $tight>声音</TrackInfo>
        <Lane />
      </Track>
      <Cursor />
    </Tracks>
  </Timeline>
);

/* ---------- callout from the chosen title to its clip ---------- */

const Callout = styled.svg`
  position: absolute;
  left: 0;
  top: 0;
  pointer-events: none;
`;

export default function App() {
  return (
    <>
      <Global />
      <Workspace lang="zh-CN">
        <Upper>
          <PreviewPanel />
          <LibraryPanel />
        </Upper>
        <TimelinePanel />
        <Callout width="1300" height="850" viewBox="0 0 1300 850" fill="none" stroke={c.red} aria-hidden="true">
          <rect x="1139" y="71" width="154" height="140" strokeWidth="4" rx="1" />
          <path d="M1140 211L415 834" strokeWidth="5" />
          <path d="M417 819L411 837L430 834" strokeWidth="5" strokeLinecap="round" strokeLinejoin="miter" />
        </Callout>
      </Workspace>
    </>
  );
}
